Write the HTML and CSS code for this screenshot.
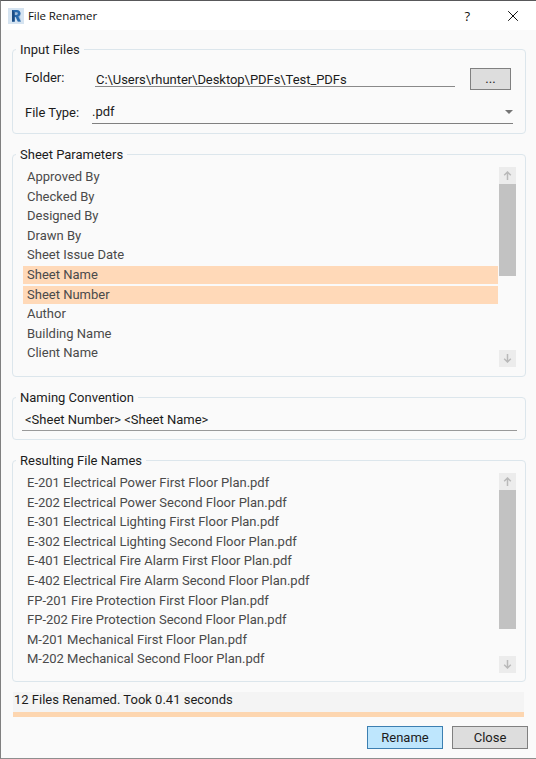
FILE: index.html
```html
<!DOCTYPE html>
<html lang="en">
<head>
<meta charset="utf-8">
<title>File Renamer</title>
<link rel="stylesheet" href="styles.css">
</head>
<body>
<div class="window">
  <header class="titlebar">
    <svg class="logo" width="16" height="16" viewBox="0 0 16 16">
      <path d="M0 0H16V16H0Z" fill="#d6e4f1"/>
      <path d="M4 2H9.5L13 5L12 9L13 14H10L7 9V14H4Z" fill="#a0bddb"/>
      <path fill-rule="evenodd" d="M4 2H8.7C11.4 2 12.4 3.3 12.4 5.3C12.4 7 11.6 8 10.3 8.5L12.8 13.5H9.8L7.8 9H6.6V13.5H4ZM6.6 4.2V6.9H8.4C9.4 6.9 9.8 6.3 9.8 5.5S9.4 4.2 8.4 4.2Z" fill="#2869ac"/>
      <path d="M4 2L6.6 4.2V13.5H4Z" fill="#1c4c83"/>
    </svg>
    <span class="title">File Renamer</span>
    <span class="help">?</span>
    <svg class="close" width="10" height="10" viewBox="0 0 10 10"><path d="M.2 .2L9.8 9.8M9.8 .2L.2 9.8" stroke="#111" stroke-width="1"/></svg>
  </header>
  <main>
    <section class="group input-files">
      <h2>Input Files</h2>
      <div class="row folder">
        <label>Folder:</label>
        <div class="field">C:\Users\rhunter\Desktop\PDFs\Test_PDFs</div>
        <button class="browse">...</button>
      </div>
      <div class="row type">
        <label>File Type:</label>
        <div class="select"><span>.pdf</span><i class="caret"></i></div>
      </div>
    </section>

    <section class="group parameters">
      <h2>Sheet Parameters</h2>
      <div class="listbox">
        <ul>
          <li>Approved By</li><li>Checked By</li><li>Designed By</li><li>Drawn By</li><li>Sheet Issue Date</li>
          <li class="selected">Sheet Name</li><li class="selected">Sheet Number</li>
          <li>Author</li><li>Building Name</li><li>Client Name</li>
        </ul>
        <div class="scrollbar">
          <div class="arrow"><svg width="9" height="9" viewBox="0 0 9 9"><path d="M4.5 9V1.2M1.2 4.3L4.5 1L7.8 4.3"/></svg></div>
          <div class="thumb"></div>
          <div class="arrow down"><svg width="9" height="9" viewBox="0 0 9 9"><path d="M4.5 0V7.8M1.2 4.7L4.5 8L7.8 4.7"/></svg></div>
        </div>
      </div>
    </section>

    <section class="group naming">
      <h2>Naming Convention</h2>
      <div class="pattern">&lt;Sheet Number&gt; &lt;Sheet Name&gt;</div>
    </section>

    <section class="group results">
      <h2>Resulting File Names</h2>
      <div class="listbox">
        <ul>
          <li>E-201 Electrical Power First Floor Plan.pdf</li>
          <li>E-202 Electrical Power Second Floor Plan.pdf</li>
          <li>E-301 Electrical Lighting First Floor Plan.pdf</li>
          <li>E-302 Electrical Lighting Second Floor Plan.pdf</li>
          <li>E-401 Electrical Fire Alarm First Floor Plan.pdf</li>
          <li>E-402 Electrical Fire Alarm Second Floor Plan.pdf</li>
          <li>FP-201 Fire Protection First Floor Plan.pdf</li>
          <li>FP-202 Fire Protection Second Floor Plan.pdf</li>
          <li>M-201 Mechanical First Floor Plan.pdf</li>
          <li>M-202 Mechanical Second Floor Plan.pdf</li>
        </ul>
        <div class="scrollbar">
          <div class="arrow"><svg width="9" height="9" viewBox="0 0 9 9"><path d="M4.5 9V1.2M1.2 4.3L4.5 1L7.8 4.3"/></svg></div>
          <div class="thumb"></div>
          <div class="arrow down"><svg width="9" height="9" viewBox="0 0 9 9"><path d="M4.5 0V7.8M1.2 4.7L4.5 8L7.8 4.7"/></svg></div>
        </div>
      </div>
    </section>

    <div class="status">12 Files Renamed. Took 0.41 seconds</div>
    <footer class="actions">
      <button class="primary">Rename</button>
      <button>Close</button>
    </footer>
  </main>
</div>
</body>
</html>
```

FILE: styles.css
```css
* { box-sizing: border-box; }

body {
  margin: 0;
  font: 13px/16px Roboto, "Liberation Sans", sans-serif;
  color: #1c1c1c;
}

.window {
  height: 759px;
  background: #fafafa;
  border: solid #58585a;
  border-width: 1px 0 1px 1px;
  border-left-color: #808080;
  border-bottom-color: #8e8e8e;
  overflow: hidden;
}

.titlebar {
  display: flex;
  align-items: center;
  height: 29px;
  padding: 0 18px 0 7px;
  background: #fff;
  color: #111;
}

.title {
  margin-left: 4px;
  font: 11.5px/16px "Open Sans", sans-serif;
  letter-spacing: -0.08px;
}

.help {
  margin-left: auto;
  margin-right: 38px;
  font: 13px/16px "Open Sans", sans-serif;
}

main { padding: 19px 8px 0 11px; }

.group {
  width: 514px;
  border: 1px solid #dce6ec;
  border-radius: 4px;
}

h2 {
  width: max-content;
  margin: -8px 0 0 3px;
  padding: 0 4px;
  background: #fafafa;
  font-size: 13px;
  font-weight: 400;
  line-height: 16px;
}

.input-files { height: 85px; margin-bottom: 20px; }
.parameters { height: 223px; margin-bottom: 20px; }
.naming { height: 43px; margin-bottom: 20px; }
.results { height: 222px; margin-bottom: 10px; }

.row { display: flex; margin-left: 12px; }
.folder { margin-top: 10px; height: 23px; }
.folder label { width: 70px; padding-top: 2px; }

.field {
  width: 360px;
  height: 19px;
  padding-top: 3px;
  padding-left: 1px;
  line-height: 17px;
  letter-spacing: -0.05px;
  border-bottom: 1px solid #898989;
}

button {
  height: 23px;
  width: 76px;
  padding: 0;
  border: 1px solid #808080;
  background: #ddd;
  color: #1c1c1c;
  font: inherit;
}

.browse { width: 41px; height: 22px; margin-left: 15px; line-height: 20px; }

.type { margin-top: 13px; height: 20px; }
.type label { width: 67px; padding-top: 1px; }

.select {
  display: flex;
  justify-content: space-between;
  width: 421px;
  height: 20px;
  border-bottom: 1px solid #808080;
}

.caret {
  height: 0;
  margin-top: 6px;
  border: solid transparent;
  border-width: 4px 4px 0;
  border-top-color: #757575;
}

.listbox {
  display: flex;
  gap: 1px;
  margin: 4px 9px 0 10px;
  height: 200px;
}

ul {
  flex: 1;
  margin: 0;
  padding: 1px 0 0;
  list-style: none;
}

li {
  height: 19.62px;
  padding-left: 4px;
  line-height: 18px;
  color: #4a4a4a;
}

.selected { background: #ffd9b8 content-box; padding: 0 0 1.6px; text-indent: 4px; }

.scrollbar {
  display: flex;
  flex-direction: column;
  width: 17px;
  height: 200px;
}

.arrow {
  display: flex;
  align-items: center;
  justify-content: center;
  height: 17px;
  background: #ececec;
}

.arrow svg { fill: none; stroke: #b9b9b9; stroke-width: 1.5; }
.arrow.down { margin-top: auto; }
.thumb { height: 92px; background: #c2c2c2; }
.results .thumb { height: 139px; }

.pattern {
  width: 495px;
  height: 25px;
  margin-left: 9px;
  padding: 6px 0 0 3px;
  border-bottom: 1px solid #999;
}

.status {
  width: 511px;
  height: 25px;
  margin-left: 1px;
  padding-left: 1px;
  background: #f4f4f4;
  border-bottom: 5px solid #fdd6b0;
}

.actions {
  display: flex;
  justify-content: flex-end;
  gap: 9px;
  margin-top: 9px;
}

.primary { background: #bee6fd; border-color: #3c7fb1; }
```
